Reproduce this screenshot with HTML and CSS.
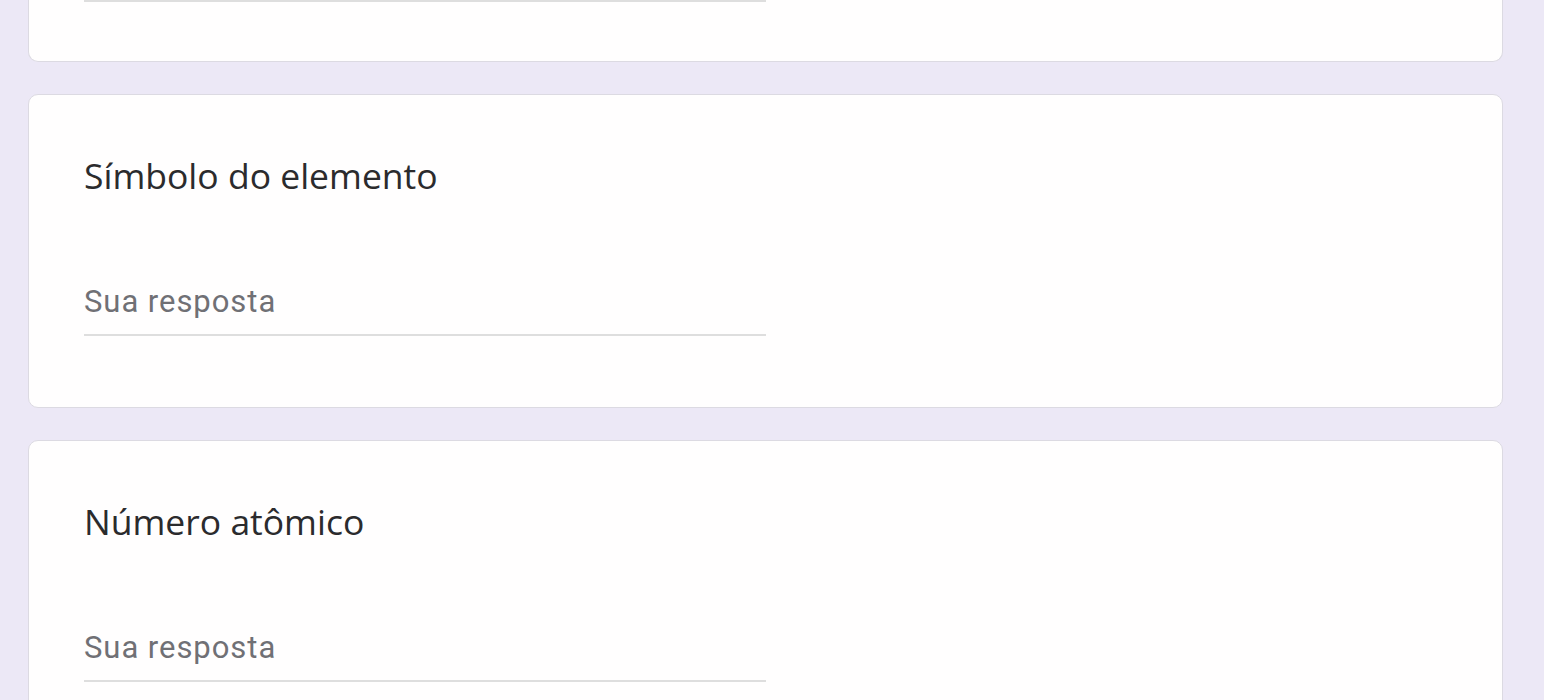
FILE: index.html
```html
<!DOCTYPE html>
<html lang="pt">
<head>
<meta charset="utf-8">
<title>Formulário</title>
<link rel="stylesheet" href="styles.css">
</head>
<body>
<main class="form">
  <section class="card card-cut">
    <div class="answer-line"></div>
  </section>
  <section class="card">
    <h2 class="question">Símbolo do elemento</h2>
    <div class="answer">
      <span class="placeholder">Sua resposta</span>
    </div>
  </section>
  <section class="card">
    <h2 class="question">Número atômico</h2>
    <div class="answer">
      <span class="placeholder">Sua resposta</span>
    </div>
  </section>
</main>
</body>
</html>
```

FILE: styles.css
```css
html, body {
  margin: 0;
  padding: 0;
  background: #ece8f6;
  height: 700px;
  overflow: hidden;
}

.form {
  display: flex;
  flex-direction: column;
  gap: 32px;
  width: 1475px;
  margin-left: 28px;
}

.card {
  background: #fffefe;
  border: 1px solid #dcdae2;
  border-radius: 10px;
  padding: 58px 55px 0;
  box-sizing: border-box;
  height: 314px;
  flex-shrink: 0;
}

.card-cut {
  height: 62px;
  padding: 0 55px;
  border-top: none;
  border-top-left-radius: 0;
  border-top-right-radius: 0;
}

.answer-line {
  width: 682px;
  border-top: 2px solid #dedede;
}

.question {
  margin: 0;
  font-family: "Open Sans", sans-serif;
  font-weight: 400;
  font-size: 35.5px;
  line-height: 44px;
  color: #2b2b2d;
}

.answer {
  margin-top: 87px;
  width: 682px;
  border-bottom: 2px solid #dedede;
  padding-bottom: 14px;
}

.placeholder {
  display: block;
  font-family: Roboto, sans-serif;
  font-size: 31px;
  line-height: 36px;
  color: #707075;
  letter-spacing: 0.95px;
}
```
